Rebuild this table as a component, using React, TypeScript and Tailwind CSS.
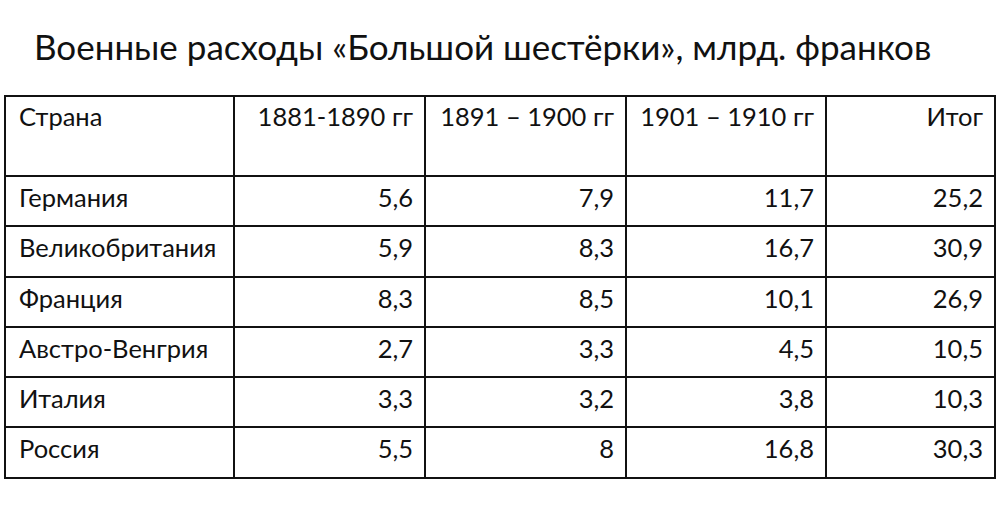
const rows: [string, string, string, string, string][] = [
  ["Германия", "5,6", "7,9", "11,7", "25,2"],
  ["Великобритания", "5,9", "8,3", "16,7", "30,9"],
  ["Франция", "8,3", "8,5", "10,1", "26,9"],
  ["Австро-Венгрия", "2,7", "3,3", "4,5", "10,5"],
  ["Италия", "3,3", "3,2", "3,8", "10,3"],
  ["Россия", "5,5", "8", "16,8", "30,3"],
];

const headers = ["1881-1890 гг", "1891 – 1900 гг", "1901 – 1910 гг", "Итог"];

export default function App() {
  return (
    <div className="w-[1000px] h-[509px] bg-white text-[#111] font-['Lato','Open_Sans',sans-serif]">
      <div className="pt-[25px] pl-[34px] h-[95px]">
        <h1 className="text-[35px] leading-[42px]">
          Военные расходы «Большой шестёрки», млрд. франков
        </h1>
      </div>
      <div className="pl-[4px]">
        <table className="border-collapse table-fixed w-[990px] text-[25.5px] leading-[30px]">
          <colgroup>
            <col className="w-[229px]" />
            <col className="w-[191px]" />
            <col className="w-[201px]" />
            <col className="w-[200px]" />
            <col className="w-[169px]" />
          </colgroup>
          <thead>
            <tr className="h-[80px]">
              <th className="border-2 border-[#111] align-top text-left font-normal pl-[13px] pt-[4px]">Страна</th>
              {headers.map((h) => (
                <th key={h} className="border-2 border-[#111] align-top text-right font-normal pr-[11px] pt-[4px]">
                  {h}
                </th>
              ))}
            </tr>
          </thead>
          <tbody>
            {rows.map((r) => (
              <tr key={r[0]} className="h-[50.3px]">
                <td className="border-2 border-[#111] align-top text-left pl-[13px] pt-[5px]">{r[0]}</td>
                {r.slice(1).map((v, i) => (
                  <td key={i} className="border-2 border-[#111] align-top text-right pr-[11px] pt-[5px]">
                    {v}
                  </td>
                ))}
              </tr>
            ))}
          </tbody>
        </table>
      </div>
    </div>
  );
}
